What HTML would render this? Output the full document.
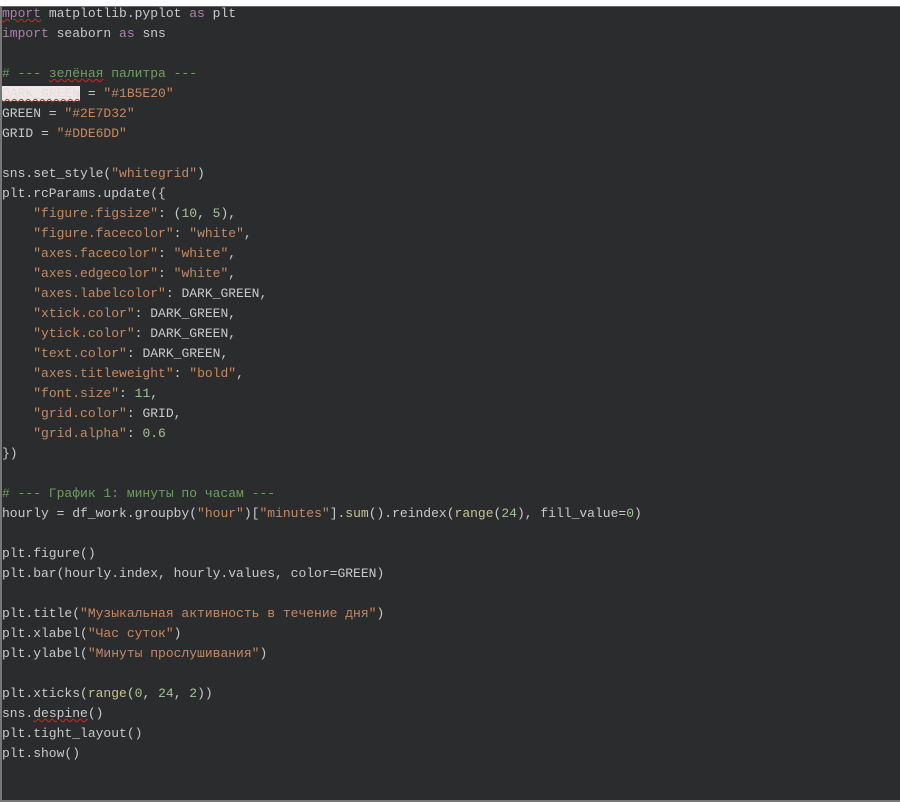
<!DOCTYPE html>
<html><head><meta charset="utf-8"><style>
html,body{margin:0;padding:0}
body{width:900px;height:802px;background:#fff;position:relative;overflow:hidden}
#ed{position:absolute;left:0;top:6px;width:900px;height:795px;background:#2b2c2e;border-top:1px solid #6a6a6a;border-left:2px solid #777;box-sizing:border-box}
#bot{position:absolute;left:0;top:800px;width:900px;height:2px;background:#777}
pre{margin:0;position:absolute;left:0;top:-3px;font-family:"Liberation Mono","DejaVu Sans Mono",monospace;font-size:13px;line-height:20px;color:#c9c9c9}
.s{color:#c7895f}.k{color:#a882a8}.c{color:#6f9f5c}.n{color:#a6c293}.b{color:#c9c48a}
.u{text-decoration:underline wavy #e02020;text-decoration-thickness:1px}
.h{background:#f0e8e8;color:#e8dcdc}
</style></head><body><div id="ed"><pre><span class="k u">mport</span> matplotlib.pyplot <span class="k">as</span> plt
<span class="k">import</span> seaborn <span class="k">as</span> sns

<span class="c"># --- <span class="u">зелёная</span> палитра ---</span>
<span class="h u">DARK_GREEN</span> = <span class="s">"#1B5E20"</span>
GREEN = <span class="s">"#2E7D32"</span>
GRID = <span class="s">"#DDE6DD"</span>

sns.set_style(<span class="s">"whitegrid"</span>)
plt.rcParams.update({
    <span class="s">"figure.figsize"</span>: (<span class="n">10</span>, <span class="n">5</span>),
    <span class="s">"figure.facecolor"</span>: <span class="s">"white"</span>,
    <span class="s">"axes.facecolor"</span>: <span class="s">"white"</span>,
    <span class="s">"axes.edgecolor"</span>: <span class="s">"white"</span>,
    <span class="s">"axes.labelcolor"</span>: DARK_GREEN,
    <span class="s">"xtick.color"</span>: DARK_GREEN,
    <span class="s">"ytick.color"</span>: DARK_GREEN,
    <span class="s">"text.color"</span>: DARK_GREEN,
    <span class="s">"axes.titleweight"</span>: <span class="s">"bold"</span>,
    <span class="s">"font.size"</span>: <span class="n">11</span>,
    <span class="s">"grid.color"</span>: GRID,
    <span class="s">"grid.alpha"</span>: <span class="n">0.6</span>
})

<span class="c"># --- График 1: минуты по часам ---</span>
hourly = df_work.groupby(<span class="s">"hour"</span>)[<span class="s">"minutes"</span>].<span class="b">sum</span>().reindex(<span class="b">range</span>(<span class="n">24</span>), fill_value=<span class="n">0</span>)

plt.figure()
plt.bar(hourly.index, hourly.values, color=GREEN)

plt.title(<span class="s">"Музыкальная активность в течение дня"</span>)
plt.xlabel(<span class="s">"Час суток"</span>)
plt.ylabel(<span class="s">"Минуты прослушивания"</span>)

plt.xticks(<span class="b">range</span>(<span class="n">0</span>, <span class="n">24</span>, <span class="n">2</span>))
sns.<span class="u">despine</span>()
plt.tight_layout()
plt.show()</pre></div><div id="bot"></div></body></html>
